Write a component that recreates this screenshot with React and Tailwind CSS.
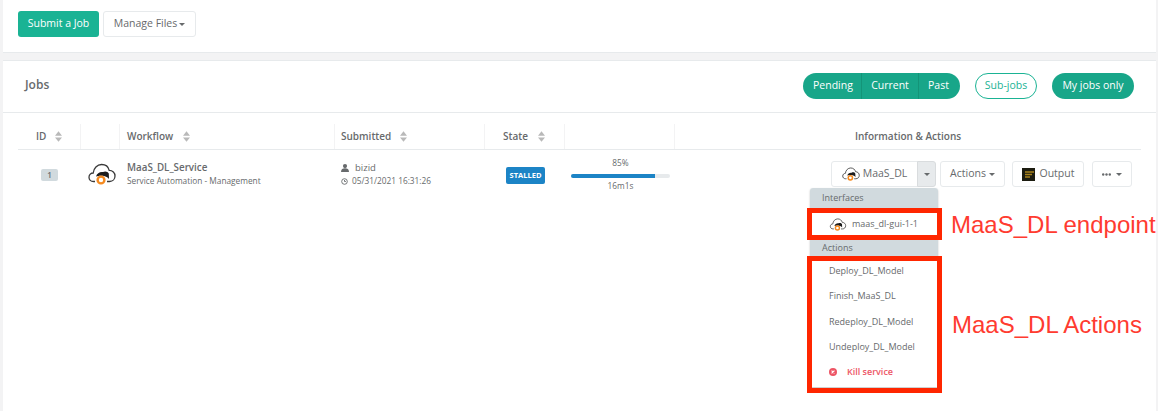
const font = { fontFamily: '"Open Sans", sans-serif' };

function Cloud({ className }) {
  return (
    <svg viewBox="0 0 28 22" className={className} fill="none">
      <path d="M7 18.5 H5.5 C2.8 18.5 1 16.6 1 14.2 C1 11.8 2.9 10 5.2 10 C5.6 5.2 9.2 1.5 13.6 1.5 C17.4 1.5 20.4 4 21.2 7.4 C24.6 7.4 27 10 27 13 C27 16 24.8 18.5 21.6 18.5 H19" stroke="#3a3a3a" strokeWidth="1.3" />
      <path d="M8 13.5 C9 10 12 8.5 15 9 C17 7.8 20 8.6 20.8 10.6 L21 16 C19.5 14 18 13.5 16 13 C13 12.4 10 13 8 13.5 Z" fill="#1d1d1d" />
      <circle cx="13" cy="17" r="3.4" fill="#fff" stroke="#f58a1f" strokeWidth="2.4" />
    </svg>
  );
}

function Sort() {
  return (
    <svg viewBox="0 0 8 12" className="w-[7px] h-[11px]" fill="#b9b9b9">
      <path d="M4 0 L8 5 H0 Z M4 12 L8 7 H0 Z" />
    </svg>
  );
}

function Caret({ className = "" }) {
  return <span className={`inline-block w-0 h-0 border-x-[3.5px] border-x-transparent border-t-[3.5px] border-t-[#676a6c] ${className}`} />;
}

function Btn({ children, className = "" }) {
  return (
    <div className={`h-[26px] flex items-center justify-center bg-white border border-[#e7eaec] rounded-[3px] text-[10.5px] text-[#676a6c] ${className}`}>
      {children}
    </div>
  );
}

function Th({ children, className = "" }) {
  return <div className={`h-[25px] flex items-center text-[10px] font-semibold text-[#676a6c] border-r border-[#f3f3f4] ${className}`}>{children}</div>;
}

export default function App() {
  return (
    <div style={font} className="relative w-[1158px] h-[411px] overflow-hidden bg-[#f3f3f4] pl-[3px] pr-[2px] text-[#676a6c]">
      <div className="h-[53px] bg-white border-b border-[#e7eaec] pl-[15px] pt-[11px] flex items-start gap-1">
        <div className="w-[81px] h-[26px] flex items-center justify-center rounded-[3px] bg-[#1ab394] text-white text-[10.5px]">Submit a Job</div>
        <Btn className="w-[93px] gap-[2px]">Manage Files<Caret /></Btn>
      </div>

      <div className="mt-[7px] h-[351px] bg-white border-t border-[#e7eaec]">
        <div className="h-[52px] border-b border-[#e7eaec] pl-[22px] pr-[22px] flex items-center justify-between">
          <div className="text-[12px] font-semibold text-[#676a6c] -mt-[4px]">Jobs</div>
          <div className="flex items-center text-[10.5px] -mt-[1px]">
            <div className="h-[26px] w-[157px] flex rounded-full bg-[#18a689] text-white overflow-hidden">
              <div className="w-[59px] pl-[10px] flex items-center border-r border-[#149478]">Pending</div>
              <div className="w-[57px] flex items-center justify-center border-r border-[#149478]">Current</div>
              <div className="flex-1 pl-[9px] flex items-center">Past</div>
            </div>
            <div className="ml-[15px] h-[26px] w-[62px] flex items-center justify-center rounded-full border border-[#1ab394] text-[#1ab394]">Sub-jobs</div>
            <div className="ml-[15px] h-[26px] w-[82px] flex items-center justify-center rounded-full bg-[#18a689] text-white">My jobs only</div>
          </div>
        </div>

        <div className="ml-[15px] mr-[15px] pt-[11px]">
          <div className="grid grid-cols-[63px_39px_215px_150px_80px_110px_466px] border-b border-[#e7eaec]">
            <Th className="pl-[18px] gap-[9px]">ID<Sort /></Th>
            <Th />
            <Th className="pl-[7px] gap-[10px]">Workflow<Sort /></Th>
            <Th className="pl-[6px] gap-[9px]">Submitted<Sort /></Th>
            <Th className="pl-[18px] gap-[10px]">State<Sort /></Th>
            <Th />
            <Th className="justify-center border-r-0">Information &amp; Actions</Th>
          </div>

          <div className="grid grid-cols-[63px_39px_215px_150px_80px_110px_466px] h-[50px]">
            <div className="pl-[23px] pt-[19px]">
              <div className="w-[17px] h-[12px] rounded-[2px] bg-[#d1dade] flex items-center justify-center text-[8px] font-semibold">1</div>
            </div>
            <div className="pl-[7px] pt-[13px]"><Cloud className="w-[28px] h-[22px]" /></div>
            <div className="pl-[7px] pt-[11px]">
              <div className="text-[9.8px] font-semibold leading-[14px]">MaaS_DL_Service</div>
              <div className="text-[8.3px] leading-[12px]">Service Automation - Management</div>
            </div>
            <div className="pl-[6px] pt-[11px]">
              <div className="flex items-center gap-[5px] text-[9.5px] leading-[14px]">
                <svg viewBox="0 0 10 10" className="w-[8px] h-[8px]" fill="#676a6c"><circle cx="5" cy="2.6" r="2.6" /><path d="M0 10 C0 6.5 2 5.4 5 5.4 C8 5.4 10 6.5 10 10 Z" /></svg>
                <span className="ml-[1px]">bizid</span>
              </div>
              <div className="flex items-center gap-[4px] text-[8.3px] leading-[12px]">
                <svg viewBox="0 0 10 10" className="w-[7px] h-[7px]" fill="none" stroke="#676a6c" strokeWidth="1.3"><circle cx="5" cy="5" r="4" /><path d="M5 2.8 V5 H7" /></svg>
                05/31/2021 16:31:26
              </div>
            </div>
            <div className="pl-[21px] pt-[17px]">
              <div className="w-[39px] h-[17px] rounded-[2px] bg-[#1c84c6] text-white text-[7.5px] font-bold flex items-center justify-center">STALLED</div>
            </div>
            <div className="pl-[6px] pt-[7px]">
              <div className="w-[99px] text-center text-[8.3px] leading-[12px]">85%</div>
              <div className="w-[99px] h-[4px] mt-[5px] rounded-sm bg-[#e7eaec] overflow-hidden"><div className="h-full w-[85%] bg-[#1c84c6]" /></div>
              <div className="w-[99px] text-center text-[8.3px] leading-[12px] mt-[2px]">16m1s</div>
            </div>
            <div className="pt-[11px] pl-[156px] flex items-start">
              <Btn className="w-[87px] rounded-r-none gap-[3px]"><Cloud className="w-[18px] h-[14px]" />MaaS_DL</Btn>
              <div className="w-[19px] h-[26px] -ml-px bg-[#e7eaec] border border-[#d9dcde] rounded-r-[3px] flex items-center justify-center"><Caret /></div>
              <Btn className="ml-[4px] w-[65px] gap-[3px]">Actions<Caret /></Btn>
              <Btn className="ml-[7px] w-[72px] gap-[5px]">
                <svg viewBox="0 0 13 13" className="w-[13px] h-[13px]"><rect width="13" height="13" fill="#1c1c10" /><path d="M3 4 H12 M3 6.5 H10 M3 9 H8" stroke="#a8821c" strokeWidth="1.4" /></svg>
                Output
              </Btn>
              <Btn className="ml-[8px] w-[40px] gap-[5px]">
                <svg viewBox="0 0 9 3" className="w-[9px] h-[3px]" fill="#676a6c"><circle cx="1.2" cy="1.5" r="1.2" /><circle cx="4.5" cy="1.5" r="1.2" /><circle cx="7.8" cy="1.5" r="1.2" /></svg>
                <Caret />
              </Btn>
            </div>
          </div>
        </div>
      </div>

      <div className="absolute left-[810px] top-[188px] w-[128px] h-[199px] bg-white rounded-t-[3px] shadow-[0_1px_2px_rgba(0,0,0,0.25)] text-[9px]">
        <div className="h-[20px] bg-[#d1dade] rounded-t-[3px] pl-[12px] flex items-center">Interfaces</div>
        <div className="h-[32px] pl-[19px] flex items-center gap-[5px]"><Cloud className="w-[18px] h-[13px]" />maas_dl-gui-1-1</div>
        <div className="h-[16px] bg-[#d1dade] pl-[12px] flex items-center">Actions</div>
        <div className="h-[25px] mt-[2px] pl-[19px] flex items-center">Deploy_DL_Model</div>
        <div className="h-[26px] pl-[19px] flex items-center">Finish_MaaS_DL</div>
        <div className="h-[25px] pl-[19px] flex items-center">Redeploy_DL_Model</div>
        <div className="h-[26px] pl-[19px] flex items-center">Undeploy_DL_Model</div>
        <div className="h-[23px] pl-[19px] flex items-center gap-[10px] font-semibold text-[#ed5565]">
          <svg viewBox="0 0 10 10" className="w-[8px] h-[8px]"><circle cx="5" cy="5" r="5" fill="#ed5565" /><path d="M3.2 3.2 L6.8 6.8 M6.8 3.2 L3.2 6.8" stroke="#fff" strokeWidth="1.4" /></svg>
          Kill service
        </div>
      </div>

      <div className="absolute left-[807px] top-[208px] w-[135px] h-[32px] border-[5px] border-[#ff2600]" />
      <div className="absolute left-[807px] top-[256px] w-[135px] h-[137px] border-[5px] border-[#ff2600]" />
      <div style={{ fontFamily: '"Liberation Sans", sans-serif' }} className="absolute left-[951px] top-[210px] text-[24px] leading-[30px] text-[#ff3b30] whitespace-nowrap">MaaS_DL endpoint</div>
      <div style={{ fontFamily: '"Liberation Sans", sans-serif' }} className="absolute left-[952px] top-[310px] text-[24px] leading-[30px] text-[#ff3b30] whitespace-nowrap">MaaS_DL Actions</div>
    </div>
  );
}
